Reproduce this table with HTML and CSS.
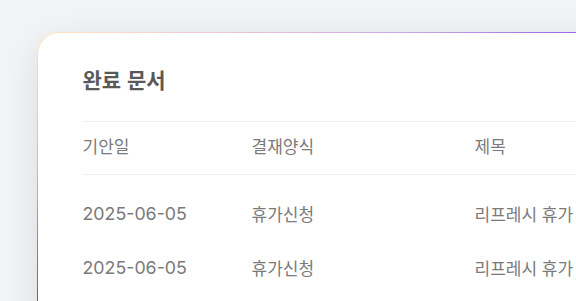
FILE: index.html
```html
<!DOCTYPE html>
<html lang="ko">
<head>
<meta charset="utf-8">
<link rel="stylesheet" href="styles.css">
</head>
<body>
<div class="page">
  <section class="card">
    <h2 class="title">완료 문서</h2>
    <div class="table">
      <div class="row head">
        <div class="cell">기안일</div>
        <div class="cell">결재양식</div>
        <div class="cell">제목</div>
      </div>
      <div class="body">
        <div class="row">
          <div class="cell num">2025-06-05</div>
          <div class="cell">휴가신청</div>
          <div class="cell">리프레시 휴가</div>
        </div>
        <div class="row">
          <div class="cell num">2025-06-05</div>
          <div class="cell">휴가신청</div>
          <div class="cell">리프레시 휴가</div>
        </div>
      </div>
    </div>
  </section>
</div>
</body>
</html>
```
FILE: styles.css
```css
html, body {
  margin: 0;
  padding: 0;
  background: #f3f4f6;
  overflow: hidden;
}
.page {
  padding: 32px 0 0 37px;
  width: 800px;
  height: 600px;
}
.card {
  box-sizing: border-box;
  width: 760px;
  height: 500px;
  border: 1.5px solid transparent;
  border-radius: 22px;
  background:
    linear-gradient(#ffffff, #ffffff) padding-box,
    linear-gradient(158deg, #fde6bf 0px, #f6c9d6 60px, #c8a6e6 140px, #9c6ae6 200px, #7b3fe0 260px) border-box;
  box-shadow: 0 10px 40px rgba(0, 0, 0, 0.1);
  padding: 30px 0 0 44.5px;
  font-family: Inter, "Noto Sans CJK KR", sans-serif;
}
.title {
  margin: 0;
  font-family: "Noto Sans CJK KR", sans-serif;
  font-size: 21px;
  font-weight: 700;
  line-height: 32px;
  color: #595959;
  letter-spacing: 0;
}
.table {
  margin-top: 26px;
}
.row {
  display: grid;
  grid-template-columns: 169px 223px 1fr;
  align-items: center;
  box-sizing: border-box;
  height: 54px;
  padding-bottom: 4px;
  color: #7a7a7a;
  font-size: 17px;
}
.row.head {
  height: 54px;
  padding-bottom: 6px;
  border-top: 1px solid #efefef;
  border-bottom: 1px solid #efefef;
}
.cell {
  white-space: nowrap;
  font-family: "Noto Sans CJK KR", sans-serif;
}
.cell.num {
  font-family: Inter, sans-serif;
  font-size: 17.8px;
}
.body {
  padding-top: 13px;
}
```
